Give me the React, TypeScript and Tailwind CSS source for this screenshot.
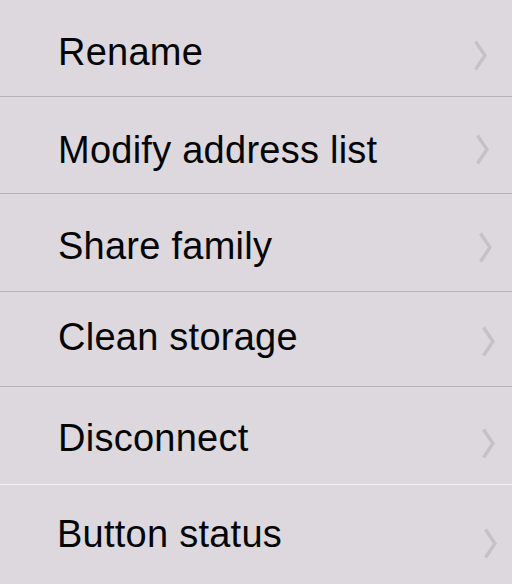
type Row = {
	label: string;
	rowClass: string;
	textClass: string;
	chevronClass: string;
};

const rows: Row[] = [
	{label: 'Rename', rowClass: 'h-[97px] border-b border-[#b4b2b5]', textClass: 'pt-[33px] pl-[58px]', chevronClass: 'mt-[40px] mr-[25px]'},
	{label: 'Modify address list', rowClass: 'h-[97px] border-b border-[#b4b2b5]', textClass: 'pt-[34px] pl-[58px]', chevronClass: 'mt-[37px] mr-[23px]'},
	{label: 'Share family', rowClass: 'h-[98px] border-b border-[#b4b2b5]', textClass: 'pt-[33px] pl-[58px]', chevronClass: 'mt-[38px] mr-[20px]'},
	{label: 'Clean storage', rowClass: 'h-[95px] border-b border-[#b4b2b5]', textClass: 'pt-[26px] pl-[58px]', chevronClass: 'mt-[34px] mr-[17px]'},
	{label: 'Disconnect', rowClass: 'h-[98px] border-b border-[#f4f2f4]', textClass: 'pt-[32px] pl-[58px]', chevronClass: 'mt-[41px] mr-[17px]'},
	{label: 'Button status', rowClass: 'h-[99px]', textClass: 'pt-[30px] pl-[57px]', chevronClass: 'mt-[43px] mr-[15px]'},
];

const Chevron = ({className}: {className: string}) => (
	<svg className={className} width="13" height="31" viewBox="0 0 13 31" fill="none">
		<path d="M1.5 1.5 L11 15.5 L1.5 29.5" stroke="#c4c2c6" strokeWidth="3.4" strokeLinecap="butt" strokeLinejoin="miter"/>
	</svg>
);

const App = () => (
	<div className="w-[512px] h-[584px] overflow-hidden bg-[#dcd8dd] font-['Liberation_Sans',Arial,sans-serif] text-[#050505]">
		{rows.map(row => (
			<div key={row.label} className={`flex items-start justify-between ${row.rowClass}`}>
				<span className={`text-[38px] leading-[38px] tracking-[0.25px] ${row.textClass}`}>{row.label}</span>
				<Chevron className={`shrink-0 ${row.chevronClass}`}/>
			</div>
		))}
	</div>
);

export default App;
